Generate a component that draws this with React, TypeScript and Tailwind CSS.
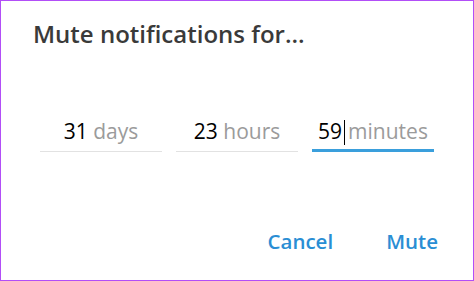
const fields = [
  { value: "31", unit: "days", active: false },
  { value: "23", unit: "hours", active: false },
  { value: "59", unit: "minutes", active: true },
];

export default function App() {
  return (
    <div
      className="w-[474px] h-[281px] bg-white border border-[#b24ef7] flex flex-col"
      style={{ fontFamily: '"Open Sans", "Liberation Sans", sans-serif' }}
    >
      {/* Title */}
      <div className="pt-[17px] pl-[32px] text-[24px] leading-[32px] font-semibold text-[#3a3a3a]">
        Mute notifications for...
      </div>

      {/* Duration inputs */}
      <div className="mt-[66px] pl-[39px] flex gap-[14px]">
        {fields.map(f => (
          <div key={f.unit} className="w-[122px] h-[36px] flex flex-col">
            <div className="h-[30px] text-[21px] leading-[30px] text-center whitespace-nowrap">
              <span className="text-black">{f.value}</span>
              {f.active ? (
                <>
                  <span className="inline-block w-px h-[25px] bg-black align-[-6px] ml-[2px]" />
                  <span className="text-[#9b9b9b] ml-[3px]">{f.unit}</span>
                </>
              ) : (
                <span className="text-[#9b9b9b]"> {f.unit}</span>
              )}
            </div>
            {f.active ? <div className="mt-auto h-[3px] bg-[#3a9fdc]" /> : <div className="mt-auto h-px bg-[#e2e2e2]" />}
          </div>
        ))}
      </div>

      {/* Actions */}
      <div className="mt-[75px] pr-[35px] flex justify-end gap-[53px] text-[20.5px] leading-[28px] font-semibold text-[#2a8ed4]">
        <button className="cursor-pointer">Cancel</button>
        <button className="cursor-pointer">Mute</button>
      </div>
    </div>
  );
}
